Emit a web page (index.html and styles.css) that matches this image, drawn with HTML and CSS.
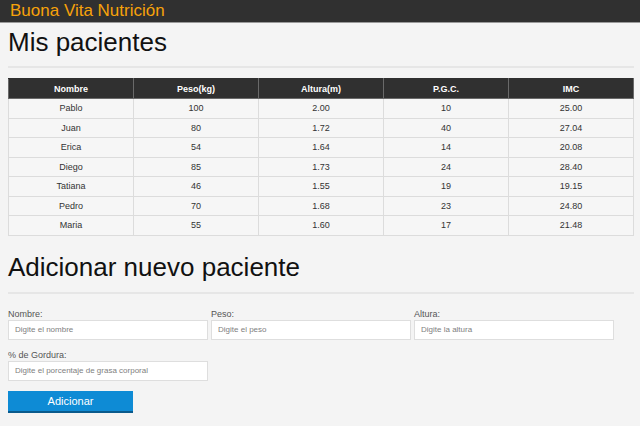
FILE: index.html
```html
<!DOCTYPE html>
<html lang="es">
<head>
<meta charset="utf-8">
<title>Buona Vita Nutrición</title>
<link rel="stylesheet" href="styles.css">
</head>
<body>
<header class="topbar">
  <h1 class="brand">Buona Vita Nutrición</h1>
</header>
<main class="container">
  <section class="patients">
    <h2 class="section-title">Mis pacientes</h2>
    <div class="rule"></div>
    <table class="patients-table">
      <thead>
        <tr>
          <th>Nombre</th>
          <th>Peso(kg)</th>
          <th>Altura(m)</th>
          <th>P.G.C.</th>
          <th>IMC</th>
        </tr>
      </thead>
      <tbody>
        <tr><td>Pablo</td><td>100</td><td>2.00</td><td>10</td><td>25.00</td></tr>
        <tr><td>Juan</td><td>80</td><td>1.72</td><td>40</td><td>27.04</td></tr>
        <tr><td>Erica</td><td>54</td><td>1.64</td><td>14</td><td>20.08</td></tr>
        <tr><td>Diego</td><td>85</td><td>1.73</td><td>24</td><td>28.40</td></tr>
        <tr><td>Tatiana</td><td>46</td><td>1.55</td><td>19</td><td>19.15</td></tr>
        <tr><td>Pedro</td><td>70</td><td>1.68</td><td>23</td><td>24.80</td></tr>
        <tr><td>Maria</td><td>55</td><td>1.60</td><td>17</td><td>21.48</td></tr>
      </tbody>
    </table>
  </section>
  <section class="add">
    <h2 class="section-title second">Adicionar nuevo paciente</h2>
    <div class="rule rule-second"></div>
    <form class="add-form">
      <div class="form-row">
        <div class="field">
          <label for="nombre">Nombre:</label>
          <input id="nombre" type="text" placeholder="Digite el nombre">
        </div>
        <div class="field">
          <label for="peso">Peso:</label>
          <input id="peso" type="text" placeholder="Digite el peso">
        </div>
        <div class="field">
          <label for="altura">Altura:</label>
          <input id="altura" type="text" placeholder="Digite la altura">
        </div>
      </div>
      <div class="form-row">
        <div class="field">
          <label for="gordura">% de Gordura:</label>
          <input id="gordura" type="text" placeholder="Digite el porcentaje de grasa corporal">
        </div>
      </div>
      <button type="button" class="btn">Adicionar</button>
    </form>
  </section>
</main>
</body>
</html>
```
FILE: styles.css
```css
* { box-sizing: border-box; }

html, body {
  margin: 0;
  padding: 0;
  background: #f4f4f4;
  font-family: "Liberation Sans", Arial, sans-serif;
  color: #333;
}

.topbar {
  height: 23px;
  background: #303030;
  border-bottom: 1px solid #9a9a9a;
  padding-left: 10px;
}

.brand {
  margin: 0;
  font-size: 17px;
  line-height: 22px;
  font-weight: normal;
  color: #f7a20a;
}

.container {
  width: 634px;
  padding-left: 8px;
}

.section-title {
  margin: 4px 0 0;
  font-size: 26px;
  line-height: 30px;
  font-weight: normal;
  color: #111;
}

.section-title.second {
  margin-top: 16px;
}

.rule {
  height: 2px;
  background: #e6e6e6;
  margin-top: 9px;
}

.rule-second {
  margin-top: 10px;
}

.patients-table {
  margin-top: 10px;
  width: 100%;
  border-collapse: collapse;
  table-layout: fixed;
  font-size: 9px;
  border: 1px solid #d6d6d6;
}

.patients-table th {
  background: #303030;
  color: #fff;
  font-weight: bold;
  height: 20px;
  padding: 0;
  border: 1px solid #6a6a6a;
  border-top-color: #303030;
}

.patients-table td {
  height: 19.5px;
  padding: 0;
  text-align: center;
  color: #333;
  background: #f6f6f6;
  border: 1px solid #dcdcdc;
}

.add-form {
  margin-top: 15px;
}

.form-row {
  display: flex;
  gap: 3px;
  margin-bottom: 10px;
}

.field {
  width: 200px;
}

.field label {
  display: block;
  font-size: 9px;
  line-height: 11px;
  color: #555;
}

.field input {
  display: block;
  width: 200px;
  height: 20px;
  margin: 0;
  padding: 0 0 0 6px;
  border: 1px solid #dedede;
  background: #fff;
  font-family: "Liberation Sans", Arial, sans-serif;
  font-size: 8px;
  color: #333;
  outline: none;
}

.field input::placeholder {
  color: #808080;
}

.btn {
  display: block;
  margin-top: 10px;
  width: 125px;
  height: 22px;
  padding: 0;
  border: none;
  border-bottom: 2px solid #0a5a8c;
  background: #0e8bd5;
  color: #fff;
  font-family: "Liberation Sans", Arial, sans-serif;
  font-size: 11px;
  cursor: pointer;
}
```
